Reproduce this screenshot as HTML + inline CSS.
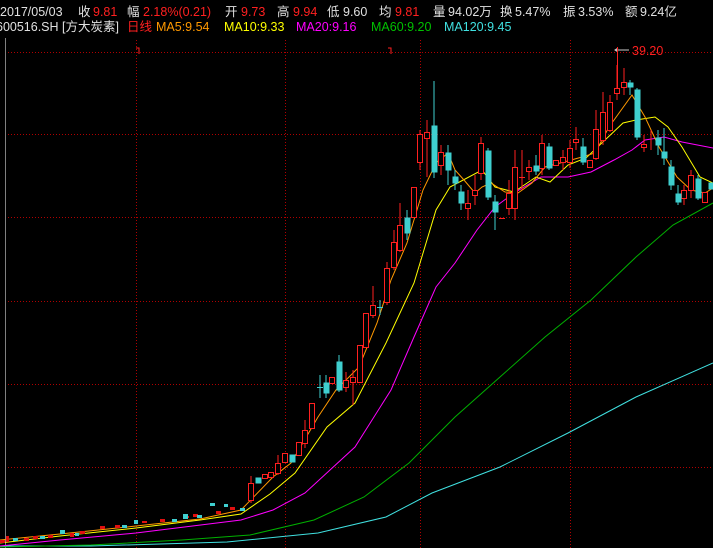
<!DOCTYPE html>
<html><head><meta charset="utf-8"><style>
html,body{margin:0;padding:0;background:#000;width:713px;height:548px;overflow:hidden}
.t{position:absolute;font-family:"Liberation Sans","Noto Sans CJK SC",sans-serif;font-size:12.5px;white-space:nowrap;line-height:14px}
.w{color:#e0e0e0}.r{color:#ff2020}
</style></head><body>
<div class="t w" style="left:0;top:5px">2017/05/03</div>
<div class="t w" style="left:78px;top:5px">收</div><div class="t r" style="left:93px;top:5px">9.81</div>
<div class="t w" style="left:127px;top:5px">幅</div><div class="t r" style="left:143px;top:5px">2.18%(0.21)</div>
<div class="t w" style="left:225px;top:5px">开</div><div class="t r" style="left:241px;top:5px">9.73</div>
<div class="t w" style="left:277px;top:5px">高</div><div class="t r" style="left:293px;top:5px">9.94</div>
<div class="t w" style="left:327px;top:5px">低</div><div class="t w" style="left:343px;top:5px">9.60</div>
<div class="t w" style="left:379px;top:5px">均</div><div class="t r" style="left:395px;top:5px">9.81</div>
<div class="t w" style="left:433px;top:5px">量</div><div class="t w" style="left:448px;top:5px">94.02万</div>
<div class="t w" style="left:500px;top:5px">换</div><div class="t w" style="left:515px;top:5px">5.47%</div>
<div class="t w" style="left:563px;top:5px">振</div><div class="t w" style="left:578px;top:5px">3.53%</div>
<div class="t w" style="left:625px;top:5px">额</div><div class="t w" style="left:640px;top:5px">9.24亿</div>
<div class="t w" style="left:-4px;top:20px">600516.SH [方大炭素]</div>
<div class="t r" style="left:127px;top:20px">日线</div>
<div class="t" style="left:156px;top:20px;color:#ff9900">MA5:9.54</div>
<div class="t" style="left:224px;top:20px;color:#ffff00">MA10:9.33</div>
<div class="t" style="left:296px;top:20px;color:#ff00ff">MA20:9.16</div>
<div class="t" style="left:371px;top:20px;color:#00c000">MA60:9.20</div>
<div class="t" style="left:444px;top:20px;color:#40e0e0">MA120:9.45</div>
<div class="t r" style="left:632px;top:44px">39.20</div>
<svg width="713" height="548" style="position:absolute;left:0;top:0">
<g stroke="#b00000" stroke-width="1" stroke-dasharray="1,2">
<line x1="5" y1="52.5" x2="713" y2="52.5"/><line x1="5" y1="134.5" x2="713" y2="134.5"/><line x1="5" y1="217.5" x2="713" y2="217.5"/><line x1="5" y1="301.5" x2="713" y2="301.5"/><line x1="5" y1="384.5" x2="713" y2="384.5"/><line x1="5" y1="467.5" x2="713" y2="467.5"/>
<line x1="136.5" y1="40" x2="136.5" y2="548"/><line x1="285.5" y1="40" x2="285.5" y2="548"/><line x1="420.5" y1="40" x2="420.5" y2="548"/><line x1="570.5" y1="40" x2="570.5" y2="548"/>
</g>
<line x1="5.5" y1="38" x2="5.5" y2="548" stroke="#808080"/>
<path d="M136 48h3v6M388 48h3v6" stroke="#ff2020" fill="none"/>
<path d="M618 48l-3 2 3 2M615 50h14" stroke="#ccc" fill="none"/>
<line x1="617.5" y1="47" x2="617.5" y2="88" stroke="#ff2020"/>
<g stroke-width="1" fill="none">
<polyline stroke="#40e0e0" points="0,546 91,546 227,542 318,533 386,517 432,493 500,467 568,433 636,397 713,363"/>
<polyline stroke="#00b000" points="0,547 91,545 182,540 250,535 314,520 364,497 409,463 455,417 500,377 545,337 591,300 636,257 673,225 713,203"/>
<polyline stroke="#ff00ff" points="0,546 60,540 136,533 241,520 273,510 305,493 355,447 391,390 414,337 436,287 455,263 477,230 495,207 514,193 541,177 568,177 591,172 614,160 632,150 645,140 664,137 682,142 713,148"/>
<polyline stroke="#ffff00" points="0,543 60,536 136,528 200,520 241,514 270,494 295,473 327,427 355,403 386,343 414,283 436,210 450,187 482,170 495,187 514,192 536,177 550,182 568,165 586,158 605,140 623,123 636,120 655,117 668,127 682,147 700,177 713,183"/>
<polyline stroke="#ff9900" points="0,540 60,534 136,526 200,519 241,510 273,477 291,463 318,417 336,390 359,367 377,323 391,280 407,243 423,190 436,163 448,153 455,170 464,180 475,193 482,187 491,183 505,192 518,193 532,183 545,167 564,162 582,157 595,153 609,127 632,95 645,117 659,147 677,177 691,190 705,193 713,188"/>
</g>
<g stroke="#ff2020" fill="#000" stroke-width="1">
<line x1="251" y1="476" x2="251" y2="503"/><rect x="248.5" y="483.5" width="5" height="17"/>
<rect x="262.5" y="474.5" width="5" height="4"/><rect x="268.5" y="472.5" width="5" height="5"/>
<line x1="278" y1="455" x2="278" y2="475"/><rect x="275.5" y="463.5" width="5" height="10"/>
<rect x="282.5" y="453.5" width="5" height="9"/>
<rect x="296.5" y="442.5" width="5" height="13"/>
<line x1="305" y1="420" x2="305" y2="448"/><rect x="302.5" y="430.5" width="5" height="13"/>
<rect x="309.5" y="403.5" width="5" height="25"/>
<rect x="329.5" y="377.5" width="5" height="6"/>
<line x1="346" y1="372" x2="346" y2="392"/><rect x="343.5" y="380.5" width="5" height="7"/>
<line x1="353" y1="370" x2="353" y2="405"/><rect x="350.5" y="377.5" width="5" height="5"/>
<rect x="357.5" y="345.5" width="5" height="37"/>
<rect x="363.5" y="313.5" width="5" height="34"/>
<line x1="373" y1="286" x2="373" y2="318"/><rect x="370.5" y="305.5" width="5" height="10"/>
<line x1="387" y1="262" x2="387" y2="305"/><rect x="384.5" y="268.5" width="5" height="34"/>
<line x1="394" y1="230" x2="394" y2="270"/><rect x="391.5" y="242.5" width="5" height="25"/>
<line x1="400" y1="203" x2="400" y2="252"/><rect x="397.5" y="225.5" width="5" height="25"/>
<rect x="411.5" y="187.5" width="5" height="30"/>
<line x1="420" y1="130" x2="420" y2="170"/><rect x="417.5" y="134.5" width="5" height="28"/>
<line x1="427" y1="120" x2="427" y2="177"/><rect x="424.5" y="132.5" width="5" height="6"/>
<line x1="441" y1="145" x2="441" y2="175"/><rect x="438.5" y="152.5" width="5" height="13"/>
<line x1="468" y1="190" x2="468" y2="220"/><rect x="465.5" y="203.5" width="5" height="5"/>
<line x1="475" y1="175" x2="475" y2="205"/><rect x="472.5" y="190.5" width="5" height="5"/>
<line x1="481" y1="137" x2="481" y2="180"/><rect x="478.5" y="143.5" width="5" height="30"/>
<line x1="499" y1="218.5" x2="505" y2="218.5"/>
<line x1="509" y1="180" x2="509" y2="215"/><rect x="506.5" y="193.5" width="5" height="15"/>
<line x1="515" y1="150" x2="515" y2="220"/><rect x="512.5" y="167.5" width="5" height="41"/>
<line x1="522" y1="150" x2="522" y2="190"/><line x1="519" y1="177.5" x2="525" y2="177.5"/>
<line x1="529" y1="160" x2="529" y2="180"/><rect x="526.5" y="167.5" width="5" height="4"/>
<line x1="542" y1="135" x2="542" y2="175"/><rect x="539.5" y="143.5" width="5" height="25"/>
<rect x="553.5" y="160.5" width="5" height="5"/>
<line x1="563" y1="150" x2="563" y2="170"/><rect x="560.5" y="157.5" width="5" height="5"/>
<line x1="570" y1="140" x2="570" y2="168"/><rect x="567.5" y="148.5" width="5" height="14"/>
<line x1="576" y1="127" x2="576" y2="150"/><rect x="573.5" y="139.5" width="5" height="3"/>
<rect x="587.5" y="160.5" width="5" height="7"/>
<line x1="596" y1="110" x2="596" y2="160"/><rect x="593.5" y="129.5" width="5" height="29"/>
<line x1="603" y1="92" x2="603" y2="145"/><rect x="600.5" y="112.5" width="5" height="28"/>
<line x1="610" y1="95" x2="610" y2="132"/><rect x="607.5" y="102.5" width="5" height="28"/>
<line x1="617" y1="65" x2="617" y2="100"/><rect x="614.5" y="88.5" width="5" height="5"/>
<line x1="624" y1="68" x2="624" y2="95"/><rect x="621.5" y="82.5" width="5" height="5"/>
<line x1="644" y1="135" x2="644" y2="152"/><rect x="641.5" y="144.5" width="5" height="3"/>
<line x1="651" y1="130" x2="651" y2="150"/>
<line x1="684" y1="185" x2="684" y2="205"/><rect x="681.5" y="190.5" width="5" height="8"/>
<line x1="691" y1="170" x2="691" y2="198"/><rect x="688.5" y="175.5" width="5" height="15"/>
<rect x="702.5" y="192.5" width="5" height="10"/>
</g>
<g fill="#3fcfcf" stroke="#3fcfcf" stroke-width="1">
<rect x="256" y="478" width="5" height="5"/>
<rect x="290" y="455" width="5" height="7"/>
<line x1="320" y1="375" x2="320" y2="398"/><line x1="317" y1="387.5" x2="323" y2="387.5"/>
<line x1="326" y1="375" x2="326" y2="398"/><rect x="324" y="383" width="5" height="10"/>
<line x1="339" y1="355" x2="339" y2="392"/><rect x="337" y="362" width="5" height="28"/>
<line x1="380" y1="300" x2="380" y2="315"/><line x1="377" y1="307.5" x2="383" y2="307.5"/>
<line x1="407" y1="210" x2="407" y2="240"/><rect x="405" y="218" width="5" height="15"/>
<line x1="434" y1="81" x2="434" y2="178"/><rect x="432" y="126" width="5" height="46"/>
<line x1="448" y1="145" x2="448" y2="185"/><rect x="446" y="153" width="5" height="17"/>
<line x1="455" y1="170" x2="455" y2="190"/><rect x="453" y="177" width="5" height="6"/>
<line x1="461" y1="185" x2="461" y2="210"/><rect x="459" y="192" width="5" height="11"/>
<line x1="488" y1="148" x2="488" y2="200"/><rect x="486" y="151" width="5" height="46"/>
<line x1="495" y1="195" x2="495" y2="230"/><rect x="493" y="202" width="5" height="10"/>
<line x1="536" y1="155" x2="536" y2="175"/><rect x="534" y="166" width="5" height="5"/>
<line x1="549" y1="143" x2="549" y2="170"/><rect x="547" y="147" width="5" height="21"/>
<line x1="583" y1="138" x2="583" y2="165"/><rect x="581" y="147" width="5" height="15"/>
<line x1="630" y1="80" x2="630" y2="95"/><rect x="628" y="83" width="5" height="4"/>
<line x1="637" y1="88" x2="637" y2="140"/><rect x="635" y="90" width="5" height="47"/>
<line x1="658" y1="130" x2="658" y2="155"/><rect x="656" y="138" width="5" height="7"/>
<line x1="664" y1="128" x2="664" y2="165"/><rect x="662" y="152" width="5" height="6"/>
<line x1="671" y1="160" x2="671" y2="190"/><rect x="669" y="167" width="5" height="18"/>
<line x1="678" y1="185" x2="678" y2="205"/><rect x="676" y="194" width="5" height="8"/>
<line x1="698" y1="175" x2="698" y2="200"/><rect x="696" y="179" width="5" height="19"/>
<rect x="709" y="183" width="5" height="6"/>
</g>
<g fill="#e01010">
<rect x="0" y="540" width="5" height="3"/><rect x="6" y="536" width="3" height="6"/><rect x="24" y="538" width="5" height="3"/><rect x="33" y="536" width="5" height="3"/><rect x="48" y="535" width="5" height="3"/><rect x="70" y="533" width="4" height="4"/><rect x="80" y="531" width="5" height="3"/><rect x="100" y="526" width="5" height="3"/><rect x="115" y="525" width="5" height="3"/><rect x="142" y="521" width="5" height="2"/><rect x="160" y="519" width="5" height="3"/><rect x="184" y="516" width="5" height="2"/><rect x="193" y="514" width="5" height="3"/><rect x="230" y="507" width="5" height="3"/><rect x="216" y="511" width="5" height="3"/>
</g>
<g fill="#3fcfcf">
<rect x="13" y="538" width="5" height="3"/><rect x="40" y="536" width="5" height="3"/><rect x="60" y="530" width="5" height="4"/><rect x="75" y="533" width="4" height="3"/><rect x="122" y="525" width="5" height="3"/><rect x="134" y="520" width="4" height="4"/><rect x="172" y="519" width="5" height="3"/><rect x="183" y="514" width="5" height="5"/><rect x="197" y="515" width="5" height="3"/><rect x="240" y="508" width="5" height="3"/><rect x="210" y="503" width="5" height="3"/><rect x="224" y="504" width="4" height="3"/>
</g>
</svg>
</body></html>
